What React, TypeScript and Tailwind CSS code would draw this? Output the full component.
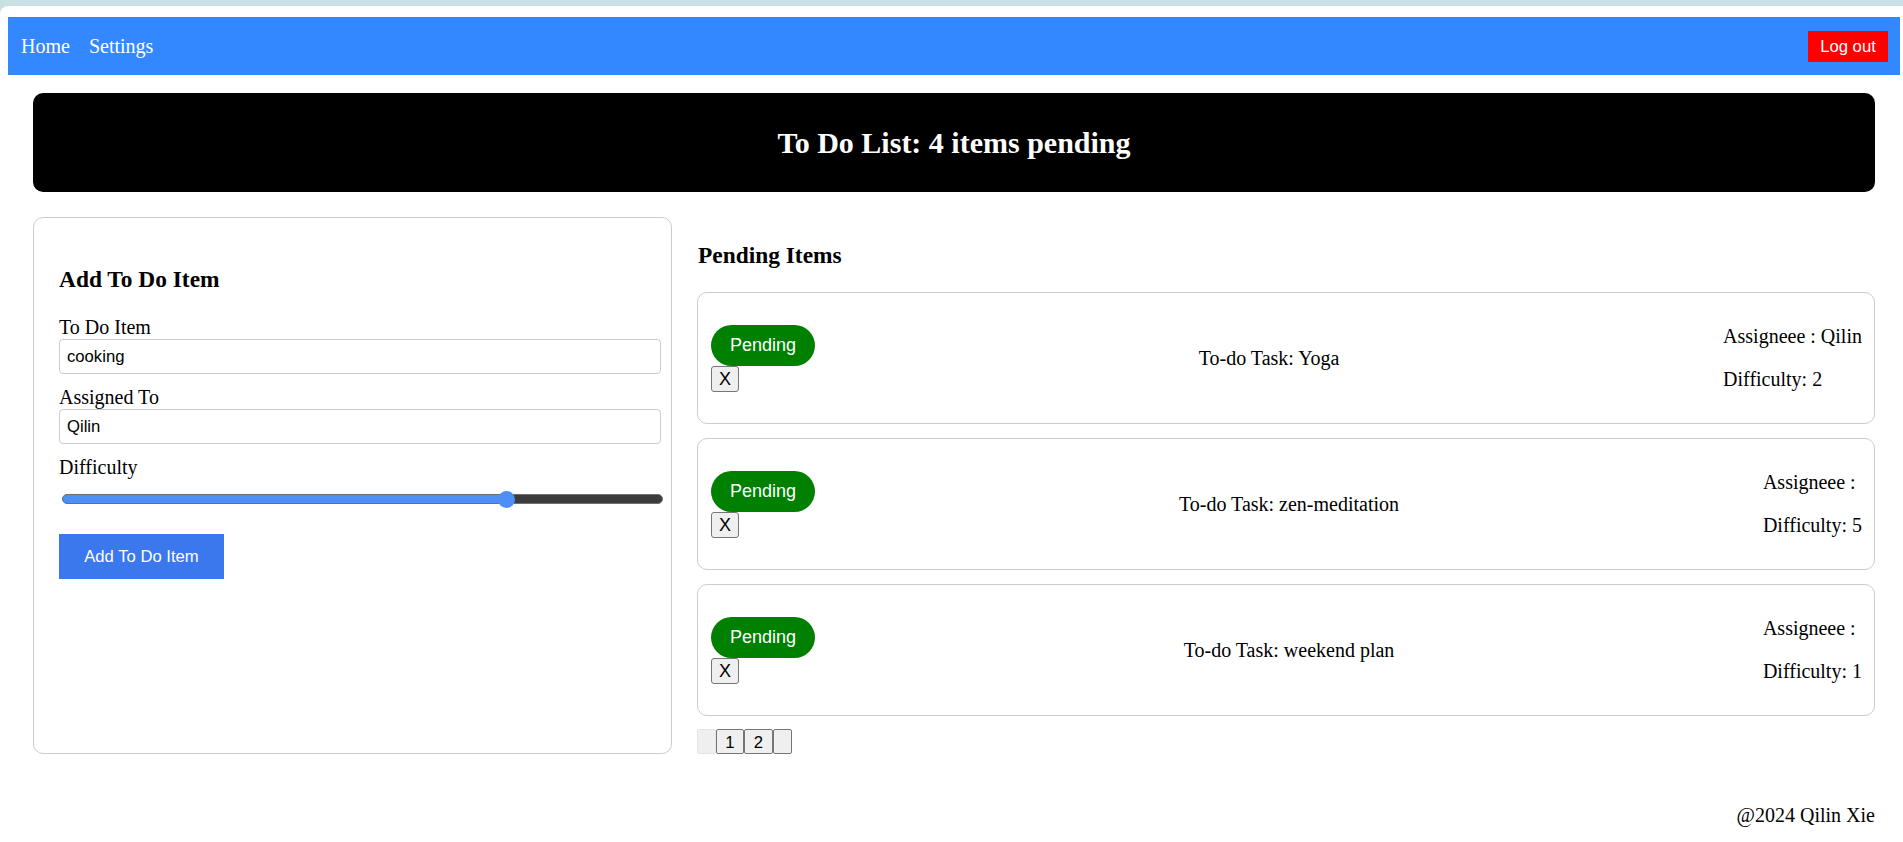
import React from "react";

const serif = "font-['Liberation_Serif','Times_New_Roman',serif]";
const sans = "font-['Liberation_Sans',Arial,sans-serif]";

const items = [
  { task: "Yoga", assignee: "Qilin", difficulty: 2 },
  { task: "zen-meditation", assignee: "", difficulty: 5 },
  { task: "weekend plan", assignee: "", difficulty: 1 },
];

function Field({ label, value }: { label: string; value: string }) {
  return (
    <div className="mb-[12px]">
      <label className="block text-[20px] leading-[23px]">{label}</label>
      <input
        readOnly
        value={value}
        className={`${sans} block w-full h-[35px] px-[7px] text-[16.67px] text-black border border-[#cccccc] rounded-[4px] outline-none`}
      />
    </div>
  );
}

function TodoCard({ task, assignee, difficulty }: { task: string; assignee: string; difficulty: number }) {
  return (
    <div className="flex items-center justify-between border border-[#cccccc] rounded-[10px] pl-[13px] pr-[12px] py-[12px]">
      <div className="flex flex-col items-start">
        <span className={`${sans} bg-[#008000] text-white text-[18px] h-[41px] px-[19px] rounded-full flex items-center justify-center`}>
          Pending
        </span>
        <button className={`${sans} h-[26px] w-[28px] text-[18px] leading-none bg-[#efefef] border border-[#767676] rounded-[3px] text-black`}>
          X
        </button>
      </div>
      <p className="text-[20px] leading-[23px]">To-do Task: {task}</p>
      <div className="py-[20px] text-[20px] leading-[23px]">
        <p>Assigneee : {assignee}</p>
        <p className="mt-[20px]">Difficulty: {difficulty}</p>
      </div>
    </div>
  );
}

export default function App() {
  const sliderPct = 74;

  return (
    <div className={`${serif} min-h-[842px] bg-[#c8dfe3] pt-[6px] text-black`}>
      <div className="bg-white rounded-tl-[8px] min-h-[836px] pt-[11px]">
        {/* top nav */}
        <nav className="ml-[8px] mr-[3px] h-[58px] bg-[#3388ff] flex items-center justify-between pl-[13px] pr-[12px]">
          <div className="flex items-center gap-[19px] text-white text-[20px]">
            <span>Home</span>
            <span>Settings</span>
          </div>
          <button className={`${sans} bg-[#ff0000] text-white text-[16.67px] h-[31px] w-[80px]`}>Log out</button>
        </nav>

        <div className="ml-[33px] mr-[28px]">
          <header className="mt-[18px] h-[99px] bg-black rounded-[10px] flex items-center justify-center">
            <h1 className="text-white font-bold text-[30px]">To Do List: 4 items pending</h1>
          </header>

          <main className="mt-[25px] flex gap-[25px]">
            {/* add form */}
            <form className="w-[639px] shrink-0 border border-[#cccccc] rounded-[10px] pt-[25px] pb-[25px] pl-[25px] pr-[10px]">
              <h3 className="mt-[23px] mb-[23px] text-[23.4px] leading-[27px] font-bold">Add To Do Item</h3>
              <Field label="To Do Item" value="cooking" />
              <Field label="Assigned To" value="Qilin" />
              <label className="block text-[20px] leading-[23px]">Difficulty</label>
              <div className="relative mt-[15px] h-[10px] ml-[3px] mr-[-2px] rounded-full bg-[#3c3c3c] border border-[#6f6f6f]">
                <div className="h-full rounded-full bg-[#4e8ff7]" style={{ width: `${sliderPct}%` }} />
                <div
                  className="absolute top-1/2 w-[17px] h-[17px] -mt-[8.5px] -ml-[8.5px] rounded-full bg-[#4e8ff7]"
                  style={{ left: `${sliderPct}%` }}
                />
              </div>
              <button
                type="button"
                className={`${sans} mt-[30px] bg-[#3b78ee] text-white text-[16.67px] h-[45px] w-[165px]`}
              >
                Add To Do Item
              </button>
            </form>

            {/* pending list */}
            <section className="flex-1 min-w-0">
              <h3 className="mt-[25px] mb-[23px] ml-[1px] text-[23.4px] leading-[27px] font-bold">Pending Items</h3>
              <div className="flex flex-col gap-[14px]">
                {items.map((it) => (
                  <TodoCard key={it.task} {...it} />
                ))}
              </div>
              <div className={`${sans} mt-[13px] flex text-[16.67px]`}>
                <button className="h-[25px] w-[19px] bg-[#efefef] border border-[#e4e4e4] rounded-[2px]" />
                <button className="h-[25px] w-[28px] bg-[#efefef] border border-[#767676] rounded-[2px]">1</button>
                <button className="h-[25px] w-[29px] bg-[#efefef] border border-[#767676] rounded-[2px]">2</button>
                <button className="h-[25px] w-[19px] bg-[#efefef] border border-[#767676] rounded-[2px]" />
              </div>
            </section>
          </main>

          <footer className="mt-[50px] text-right text-[20px] leading-[23px]">@2024 Qilin Xie</footer>
        </div>
      </div>
    </div>
  );
}
